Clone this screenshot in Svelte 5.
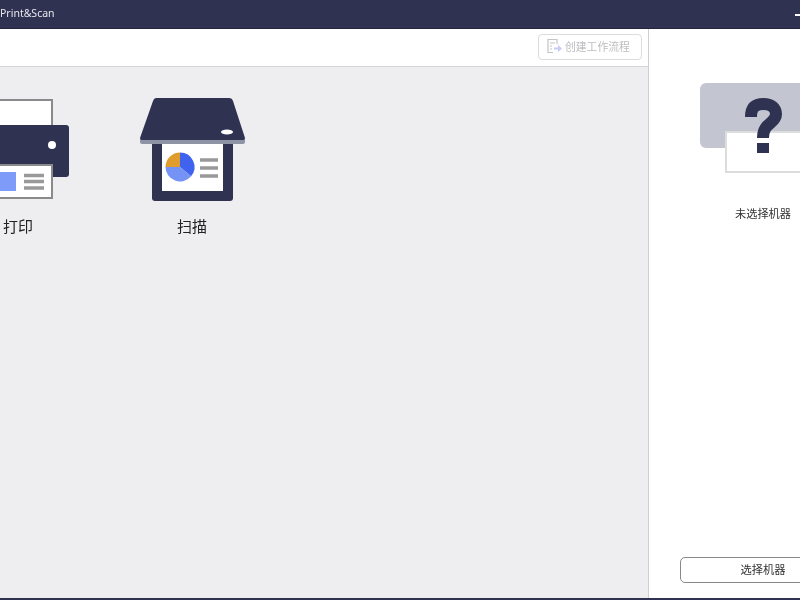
<script>
    const tiles = [
        { id: 'print', label: '打印' },
        { id: 'scan', label: '扫描' }
    ];
</script>

<div class="window">
    <header class="titlebar">
        <span class="title">Print&amp;Scan</span>
        <span class="minimize"></span>
    </header>

    <div class="content">
        <main class="main">
            <div class="toolbar">
                <button class="workflow" disabled>
                    <svg width="16" height="16" viewBox="0 0 16 16" fill="none">
                        <path d="M11 6V1.500H2V14.500H7" stroke="#c4c4c8" stroke-width="1.200" />
                        <path d="M4 5H9M4 8H6M4 11H6" stroke="#c4c4c8" stroke-width="1.200" />
                        <path d="M8 9.500H12V7L16 10.500L12 14V11.500H8Z" fill="#c9ccf2" />
                    </svg>
                    <span>创建工作流程</span>
                </button>
            </div>

            <div class="tiles">
                {#each tiles as tile}
                    <div class="tile">
                        {#if tile.id === 'print'}
                            <svg width="120" height="112" viewBox="0 0 120 112">
                                <rect x="26" y="7" width="68" height="34" fill="#fff" stroke="#8a8a8a" stroke-width="2" />
                                <rect x="9" y="32" width="102" height="52" rx="3" fill="#2f3251" />
                                <circle cx="94" cy="52" r="4" fill="#fff" />
                                <rect x="26" y="72" width="68" height="33" fill="#fff" stroke="#8a8a8a" stroke-width="2" />
                                <rect x="34" y="79" width="24" height="19" fill="#7f9bfa" />
                                <path d="M66 82.500H86M66 88.500H86M66 95H86" stroke="#999" stroke-width="3.500" />
                            </svg>
                        {:else}
                            <svg width="120" height="112" viewBox="0 0 120 112">
                                <rect x="20" y="45" width="81" height="63" rx="3" fill="#2f3251" />
                                <rect x="30" y="48" width="61" height="50" fill="#fff" />
                                <path d="M8 46H113V49Q113 51 111 51H10Q8 51 8 49Z" fill="#8f93a6" />
                                <path d="M24 5H97Q100 5 101 8L113 45Q113 47 111 47H10Q8 47 8 45L21 8Q22 5 24 5Z" fill="#2f3251" />
                                <ellipse cx="95" cy="39" rx="6" ry="2.500" fill="#fff" />
                                <path d="M48 74V59.500A14.500 14.500 0 0 1 59.100 83.300Z" fill="#3f63ee" />
                                <path d="M48 74L59.100 83.300A14.500 14.500 0 0 1 33.500 74Z" fill="#7592f5" />
                                <path d="M48 74H33.500A14.500 14.500 0 0 1 48 59.500Z" fill="#e09d2e" />
                                <path d="M68 67H86M68 75H86M68 83H86" stroke="#999" stroke-width="3.500" />
                            </svg>
                        {/if}
                        <span class="tile-label">{tile.label}</span>
                    </div>
                {/each}
            </div>
        </main>

        <aside class="side">
            <svg class="unknown" width="126" height="90" viewBox="0 0 126 90">
                <rect x="0" y="0" width="126" height="65" rx="6" fill="#c3c6d0" />
                <rect x="26" y="49" width="100" height="40" fill="#fff" stroke="#dcdcdc" stroke-width="2" />
                <path d="M51 34C51 23 57 21 63.500 21C71 21 76 25 76 31C76 41 63 39 63 55" fill="none" stroke="#2f3251" stroke-width="12" />
                <rect x="57" y="60" width="12" height="10" fill="#2f3251" />
            </svg>
            <p class="status">未选择机器</p>
            <button class="select">选择机器</button>
        </aside>
    </div>
    <div class="bottom"></div>
</div>

<style>
    :global(body) {
        margin: 0;
        overflow: hidden;
    }

    .window {
        width: 800px;
        height: 600px;
        overflow: hidden;
        display: flex;
        flex-direction: column;
        font-family: "Noto Sans CJK SC", "Noto Sans", sans-serif;
        background: #fff;
        filter: blur(0.35px);
    }

    .titlebar {
        flex: none;
        height: 28px;
        background: #2f3251;
        border-bottom: 1px solid #23243f;
        display: flex;
        justify-content: space-between;
    }

    .title {
        margin-top: 5px;
        color: #e6e7ee;
        font-family: "Noto Sans", sans-serif;
        font-size: 10.500px;
        line-height: 16px;
    }

    .minimize {
        width: 5px;
        height: 2px;
        margin-top: 14px;
        background: #fff;
    }

    .content {
        flex: 1;
        min-height: 0;
        display: flex;
    }

    .main {
        flex: none;
        width: 648px;
        display: flex;
        flex-direction: column;
        background: #eeeef0;
        border-right: 1px solid #cfcfd1;
    }

    .toolbar {
        flex: none;
        height: 37px;
        background: #fff;
        border-bottom: 1px solid #d4d4d6;
        display: flex;
        justify-content: flex-end;
        padding-right: 6px;
    }

    .workflow {
        width: 104px;
        height: 26px;
        margin-top: 5px;
        display: flex;
        align-items: center;
        gap: 3px;
        padding: 0 0 2px 7px;
        background: #fff;
        border: 1px solid #dcdcdc;
        border-radius: 4px;
        color: #bdbdc0;
        font-family: inherit;
        font-size: 10.800px;
    }

    .tiles {
        display: flex;
        gap: 54px;
        margin-left: -42px;
        padding-top: 26px;
    }

    .tile {
        width: 120px;
        display: flex;
        flex-direction: column;
        align-items: center;
    }

    .tile-label {
        margin-top: 10px;
        color: #222;
        font-size: 15px;
        line-height: 22px;
    }

    .side {
        flex: none;
        width: 228px;
        display: flex;
        flex-direction: column;
        align-items: center;
        background: #fff;
    }

    .unknown {
        margin-top: 54px;
    }

    .status {
        margin: 31px 0 0;
        color: #333;
        font-size: 11.200px;
        line-height: 18px;
    }

    .select {
        margin-top: auto;
        margin-bottom: 15px;
        width: 166px;
        height: 26px;
        padding: 0 0 2px;
        background: #fff;
        border: 1px solid #888;
        border-radius: 5px;
        color: #333;
        font-family: inherit;
        font-size: 11.300px;
    }

    .bottom {
        flex: none;
        height: 2px;
        background: #2f3251;
    }
</style>
